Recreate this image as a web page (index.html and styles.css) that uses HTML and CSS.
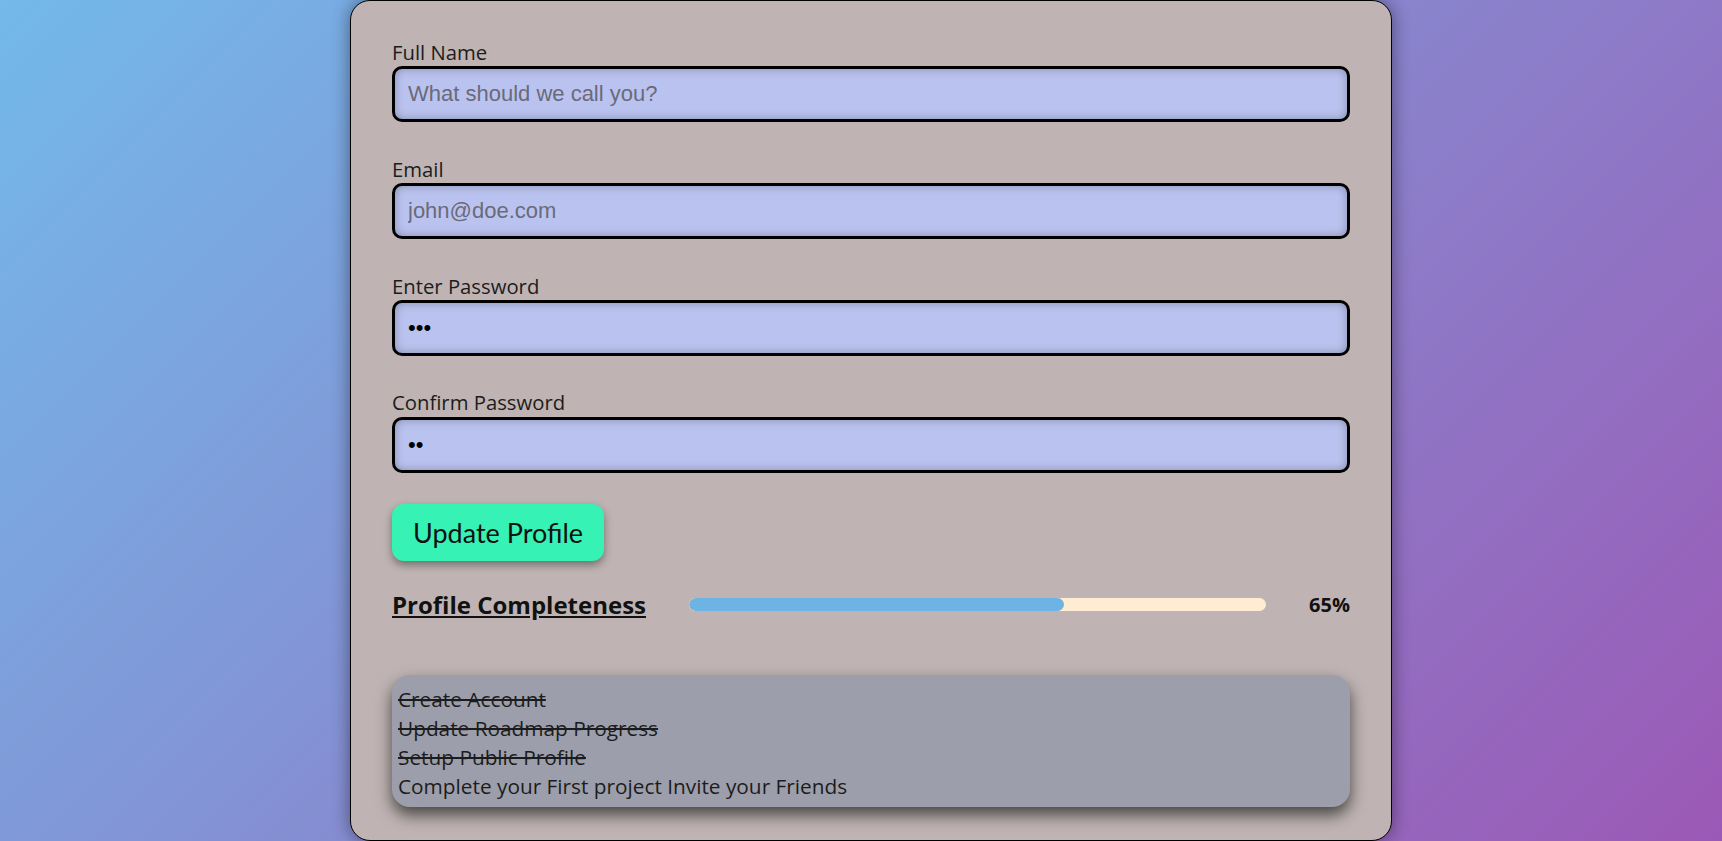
FILE: index.html
```html
<!DOCTYPE html>
<html lang="en">
<head>
<meta charset="utf-8">
<title>Profile</title>
<link rel="stylesheet" href="styles.css">
</head>
<body>
<main class="page">
  <section class="card">
    <form class="profile-form">
      <div class="field">
        <label class="field-label" for="name">Full Name</label>
        <input class="field-input" id="name" type="text" placeholder="What should we call you?">
      </div>
      <div class="field">
        <label class="field-label" for="email">Email</label>
        <input class="field-input" id="email" type="email" placeholder="john@doe.com">
      </div>
      <div class="field">
        <label class="field-label" for="pass">Enter Password</label>
        <input class="field-input" id="pass" type="password" value="abc">
      </div>
      <div class="field">
        <label class="field-label" for="confirm">Confirm Password</label>
        <input class="field-input" id="confirm" type="password" value="ab">
      </div>
      <button class="btn-update" type="button">Update Profile</button>
    </form>
    <div class="completeness">
      <h2 class="completeness-title">Profile Completeness</h2>
      <div class="progress"><div class="progress-fill" style="width:65%"></div></div>
      <span class="completeness-value">65%</span>
    </div>
    <div class="checklist">
      <div class="task done">Create Account</div>
      <div class="task done">Update Roadmap Progress</div>
      <div class="task done">Setup Public Profile</div>
      <div class="task"><span>Complete your First project</span> <span>Invite your Friends</span></div>
    </div>
  </section>
</main>
</body>
</html>
```

FILE: styles.css
```css
* {
  box-sizing: border-box;
}

html,
body {
  margin: 0;
  height: 100%;
}

body {
  background: linear-gradient(135deg, #73b9e9 0%, #9b59b6 100%);
  font-family: "Open Sans", "Noto Sans", sans-serif;
  color: #1c1c1c;
  overflow: hidden;
}

.page {
  display: flex;
  justify-content: center;
  padding-left: 20px;
  height: 841px;
}

.card {
  width: 1042px;
  height: 841px;
  background: #bfb4b3;
  border: 1px solid #000;
  border-radius: 20px;
  padding: 38px 41px 0;
  box-shadow: 0 0 18px rgba(0, 0, 0, 0.45);
}

.profile-form {
  display: flex;
  flex-direction: column;
}

.field {
  display: flex;
  flex-direction: column;
  margin-bottom: 33.6px;
}

.field-label {
  font-size: 20.3px;
  line-height: 27.2px;
  color: #1c1c1c;
}

.field-input {
  height: 56px;
  border: 3px solid #000;
  border-radius: 10px;
  background: #bac3ef;
  padding: 0 13px;
  font-family: "Liberation Sans", Arial, sans-serif;
  font-size: 22px;
  color: #000;
  box-shadow: inset 0 0 10px rgba(0, 0, 0, 0.28);
  outline: none;
}

.field-input::placeholder {
  color: #6a6a7a;
}

.btn-update {
  align-self: flex-start;
  margin-top: -1.8px;
  padding: 12px 21px;
  border: none;
  border-radius: 12px;
  background: #36f2b5;
  font-family: Lato, "Open Sans", sans-serif;
  font-size: 27px;
  line-height: 33px;
  color: #111;
  box-shadow: 0 4px 8px rgba(0, 0, 0, 0.4);
  cursor: pointer;
}

.completeness {
  display: grid;
  grid-template-columns: auto 1fr auto;
  column-gap: 43px;
  align-items: center;
  margin-top: 28px;
}

.completeness-title {
  margin: 0;
  font-size: 24px;
  line-height: 31px;
  font-weight: 700;
  text-decoration: underline;
  color: #111;
}

.progress {
  height: 13px;
  background: #ffecd2;
  border-radius: 7px;
  overflow: hidden;
}

.progress-fill {
  height: 100%;
  background: #6db4e4;
  border-radius: 7px;
}

.completeness-value {
  font-size: 20px;
  font-weight: 700;
  color: #111;
}

.checklist {
  margin-top: 55px;
  background: #9c9fab;
  border-radius: 18px;
  padding: 10px 6px 6px;
  font-size: 20.8px;
  line-height: 29px;
  color: #1c1c1c;
  box-shadow: 0 8px 16px rgba(0, 0, 0, 0.62);
}

.task.done {
  text-decoration: line-through;
}
```
